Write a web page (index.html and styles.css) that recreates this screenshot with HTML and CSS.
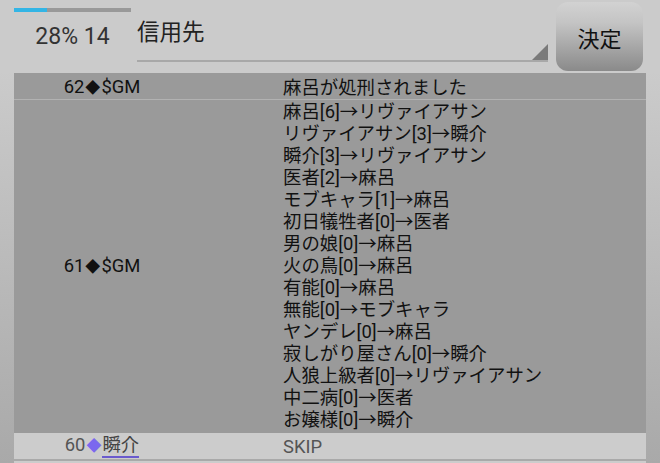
FILE: index.html
```html
<!DOCTYPE html>
<html lang="ja">
<head>
    <meta charset="UTF-8">
    <meta name="viewport" content="width=device-width, initial-scale=1.0">
    <title>ログ</title>
    <link rel="stylesheet" href="styles.css">
</head>
<body>
    <div class="header">
        <div class="status">
            <div class="progress"><div class="progress-fill"></div></div>
            <div class="count">28% 14</div>
        </div>
        <div class="spinner">
            <span class="spinner-text">信用先</span>
            <span class="spinner-arrow"></span>
        </div>
        <button class="decide">決定</button>
    </div>

    <div class="list">
        <div class="row">
            <div class="who">62<span class="dia">◆</span>$GM</div>
            <div class="what">麻呂が処刑されました</div>
        </div>
        <div class="row big">
            <div class="who">61<span class="dia">◆</span>$GM</div>
            <div class="what">
                麻呂[6]→リヴァイアサン<br>
                リヴァイアサン[3]→瞬介<br>
                瞬介[3]→リヴァイアサン<br>
                医者[2]→麻呂<br>
                モブキャラ[1]→麻呂<br>
                初日犠牲者[0]→医者<br>
                男の娘[0]→麻呂<br>
                火の鳥[0]→麻呂<br>
                有能[0]→麻呂<br>
                無能[0]→モブキャラ<br>
                ヤンデレ[0]→麻呂<br>
                寂しがり屋さん[0]→瞬介<br>
                人狼上級者[0]→リヴァイアサン<br>
                中二病[0]→医者<br>
                お嬢様[0]→瞬介
            </div>
        </div>
        <div class="row light">
            <div class="who">60<span class="dia mark">◆</span><span class="name">瞬介</span></div>
            <div class="what">SKIP</div>
        </div>
        <div class="row light next"></div>
    </div>
</body>
</html>
```

FILE: styles.css
```css
body {
    margin: 0;
    height: 463px;
    overflow: hidden;
    font-family: Roboto, "Noto Sans CJK JP", sans-serif;
    background: linear-gradient(#cbcbcb 70px, #a9a9a9 463px);
}
.header {
    display: flex;
    height: 73px;
    background: #cbcbcb;
}
.status {
    width: 117px;
    margin-left: 14px;
    padding-top: 8px;
}
.progress {
    height: 4px;
    background: #999999;
}
.progress-fill {
    width: 33px;
    height: 4px;
    background: #33b5e5;
}
.count {
    margin-top: 11px;
    text-align: center;
    font-size: 23px;
    color: #333333;
}
.spinner {
    position: relative;
    width: 411px;
    height: 62px;
    margin-left: 6px;
    border-bottom: 2px solid #a8a8a8;
    box-sizing: border-box;
}
.spinner-text {
    display: block;
    margin-top: 14px;
    font-size: 22.5px;
    color: #222222;
}
.spinner-arrow {
    position: absolute;
    right: 0;
    bottom: 0;
    width: 0;
    height: 0;
    border-left: 16px solid transparent;
    border-bottom: 16px solid #7a7a7a;
}
.decide {
    width: 87px;
    height: 69px;
    margin: 2px 0 0 8px;
    border: none;
    border-radius: 12px;
    background: linear-gradient(#d2d2d2, #c4c4c4 30%, #8a8a8a);
    font-family: "Noto Sans CJK JP", sans-serif;
    font-size: 22px;
    color: #111111;
    padding: 0;
}
.list {
    margin: 0 14px;
}
.row {
    display: grid;
    grid-template-columns: 176px 1fr;
    align-items: center;
    min-height: 26px;
    background: #9a9a9a;
    font-size: 18.4px;
    color: #111111;
    border-bottom: 1px solid #b2b2b2;
}
.row.big {
    padding: 1px 0 2px;
    line-height: 22px;
    border-bottom: none;
}
.who {
    text-align: center;
}
.dia {
    font-size: 15px;
    margin: 0 1px;
}
.what {
    padding-left: 93px;
}
.row.light {
    background: #cccccc;
    color: #555555;
    border-bottom: 2px solid #a9a9a9;
}
.row.next {
    border-bottom: none;
}
.mark {
    color: #7b68ee;
}
.name {
    border-bottom: 2px solid #6a5acd;
    line-height: 22px;
    display: inline-block;
    color: #444444;
}
```
